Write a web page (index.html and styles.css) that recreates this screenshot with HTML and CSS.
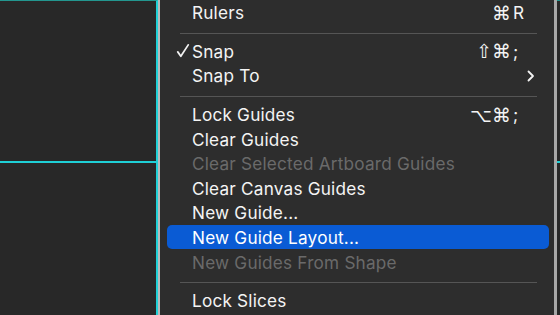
FILE: index.html
```html
<!DOCTYPE html>
<html lang="en">

<head>
  <meta charset="UTF-8">
  <meta name="viewport" content="width=device-width, initial-scale=1.0">
  <title>View Menu</title>
  <link rel="stylesheet" href="styles.css">
</head>

<body>
  <div class="canvas canvas-left">
    <div class="guide-h"></div>
  </div>

  <div class="menu">
    <div class="item">
      <span class="label">Rulers</span>
      <span class="keys"><span class="mods">⌘</span><span class="key">R</span></span>
    </div>
    <div class="sep"></div>

    <div class="item">
      <svg class="check" width="16" height="16" viewBox="0 0 16 16">
        <path d="M2 9 L5.5 14 L14 1" fill="none" stroke="#f2f2f2" stroke-width="2" stroke-linecap="round" stroke-linejoin="round" />
      </svg>
      <span class="label">Snap</span>
      <span class="keys"><span class="mods">⇧⌘</span><span class="key">;</span></span>
    </div>
    <div class="item">
      <span class="label">Snap To</span>
      <span class="keys">
        <svg class="chevron" width="8" height="12" viewBox="0 0 8 12">
          <path d="M1.5 1.5 L6 6 L1.5 10.5" fill="none" stroke="#f2f2f2" stroke-width="1.8" stroke-linecap="round" stroke-linejoin="round" />
        </svg>
      </span>
    </div>
    <div class="sep"></div>

    <div class="item">
      <span class="label">Lock Guides</span>
      <span class="keys"><span class="mods">⌥⌘</span><span class="key">;</span></span>
    </div>
    <div class="item"><span class="label">Clear Guides</span></div>
    <div class="item disabled"><span class="label">Clear Selected Artboard Guides</span></div>
    <div class="item"><span class="label">Clear Canvas Guides</span></div>
    <div class="item"><span class="label">New Guide...</span></div>
    <div class="item active"><span class="label">New Guide Layout...</span></div>
    <div class="item disabled"><span class="label">New Guides From Shape</span></div>
    <div class="sep"></div>

    <div class="item"><span class="label">Lock Slices</span></div>
  </div>

  <div class="canvas canvas-right">
    <div class="guide-h"></div>
  </div>
</body>

</html>
```

FILE: styles.css
```css
body {
  margin: 0;
  display: flex;
  height: 315px;
  overflow: hidden;
  background-color: #272727;
  font-family: Inter, "Noto Sans", "DejaVu Sans", sans-serif;
}

.canvas {
  background-color: #282828;
  border-top: 1px solid #23968f;
}

.canvas-left {
  width: 156px;
  border-right: 2px solid #1fd0d6;
}

.canvas-right {
  flex: 1;
}

.guide-h {
  height: 160px;
  border-bottom: 2px solid #1fd0d6;
}

.menu {
  width: 394px;
  background-color: #2d2d2d;
  border-left: 2px solid #b9b9b9;
  border-right: 3px solid #a7a7a7;
  overflow: hidden;
}

.item {
  display: flex;
  align-items: center;
  height: 24.6px;
  margin: 0 5px 0 7px;
  padding: 1px 22px 0 25px;
  box-sizing: border-box;
  position: relative;
  border-radius: 5px;
  color: #f4f4f4;
  font-size: 17.2px;
  letter-spacing: 0.2px;
}

.item.disabled {
  color: #6a6a6a;
}

.item.active {
  background-color: #0a5bd4;
  color: #ffffff;
}

.label {
  flex: 1;
  white-space: nowrap;
}

.check {
  position: absolute;
  left: 9px;
  top: 5px;
  width: 14px;
  height: 14px;
}

.keys {
  display: flex;
  align-items: center;
}

.mods {
  text-align: right;
  font-family: "DejaVu Sans", sans-serif;
  font-size: 19px;
  letter-spacing: 0;
}

.key {
  width: 14px;
  padding-left: 2px;
}

.chevron {
  margin-right: -8px;
}

.sep {
  height: 14px;
  margin: 0 17px 0 20px;
  padding-top: 8px;
  box-sizing: border-box;
}

.sep::after {
  content: "";
  display: block;
  height: 1px;
  background-color: #555555;
}
```
